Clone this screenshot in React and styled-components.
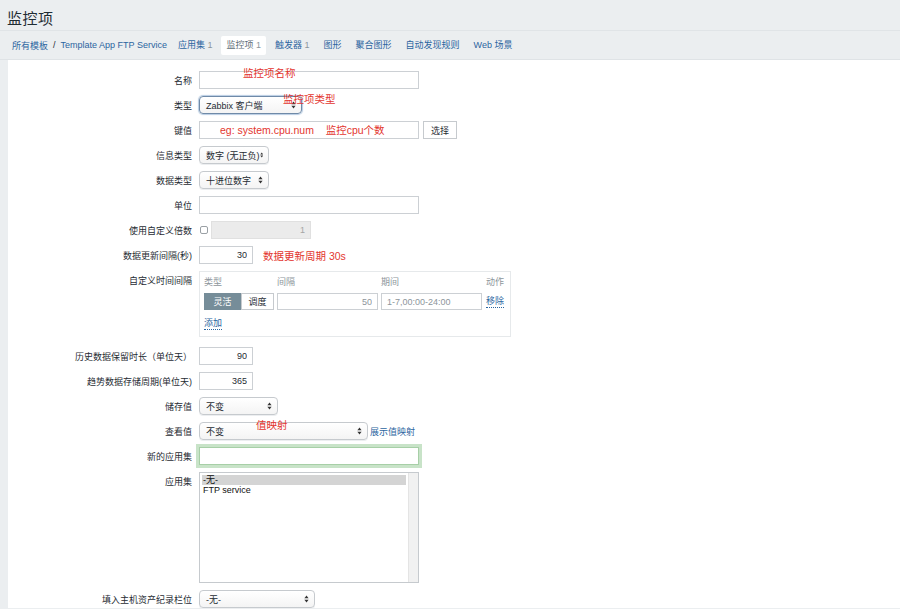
import React from "react";
import styled, { createGlobalStyle, css } from "styled-components";

const GlobalStyle = createGlobalStyle`
  html, body {
    margin: 0;
    padding: 0;
    background: #ebeef0;
    overflow: hidden;
  }
  body {
    font-family: "Liberation Sans", "Noto Sans CJK SC", sans-serif;
    color: #1f2c33;
  }
  * { box-sizing: border-box; }
`;

const Arrows = () => (
  <svg width="5" height="8" viewBox="0 0 5 8">
    <path d="M2.5 0.5 L4.6 3.2 L0.4 3.2 Z" fill="#333" />
    <path d="M2.5 7.5 L4.6 4.8 L0.4 4.8 Z" fill="#333" />
  </svg>
);

const App = () => {
  return (
    <>
      <GlobalStyle />
      <Header>
        <Title>监控项</Title>
      </Header>
      <NavBar>
        <Crumbs>
          <NavLink>所有模板</NavLink>
          <Slash>/</Slash>
          <NavLink>Template App FTP Service</NavLink>
        </Crumbs>
        <NavItem>
          应用集 <Count>1</Count>
        </NavItem>
        <NavItem $active>
          监控项 <Count>1</Count>
        </NavItem>
        <NavItem>
          触发器 <Count>1</Count>
        </NavItem>
        <NavItem>图形</NavItem>
        <NavItem>聚合图形</NavItem>
        <NavItem>自动发现规则</NavItem>
        <NavItem>Web 场景</NavItem>
      </NavBar>

      <Content>
        <Row>
          <Label>名称</Label>
          <Field>
            <Overlay>
              <TextInput $w={220} />
              <Note style={{ left: 44, top: -6 }}>监控项名称</Note>
            </Overlay>
          </Field>
        </Row>

        <Row>
          <Label>类型</Label>
          <Field>
            <Overlay>
              <Select $w={103} $focus>
                <span>Zabbix 客户端</span>
                <Arrows />
              </Select>
              <Note style={{ left: 84, top: -5 }}>监控项类型</Note>
            </Overlay>
          </Field>
        </Row>

        <Row>
          <Label>键值</Label>
          <Field>
            <Overlay>
              <TextInput $w={220} />
              <Note style={{ left: 21, top: 1 }}>
                eg: system.cpu.num&nbsp;&nbsp;&nbsp; 监控cpu个数
              </Note>
            </Overlay>
            <Button>选择</Button>
          </Field>
        </Row>

        <Row>
          <Label>信息类型</Label>
          <Field>
            <Select $w={70}>
              <span>数字 (无正负)</span>
              <Arrows />
            </Select>
          </Field>
        </Row>

        <Row>
          <Label>数据类型</Label>
          <Field>
            <Select $w={70}>
              <span>十进位数字</span>
              <Arrows />
            </Select>
          </Field>
        </Row>

        <Row>
          <Label>单位</Label>
          <Field>
            <TextInput $w={220} />
          </Field>
        </Row>

        <Row>
          <Label>使用自定义倍数</Label>
          <Field $gap={3}>
            <Checkbox />
            <TextInput $w={100} $right $disabled defaultValue="1" disabled />
          </Field>
        </Row>

        <Row>
          <Label>数据更新间隔(秒)</Label>
          <Field $gap={10}>
            <TextInput $w={54} $right defaultValue="30" />
            <InlineNote>数据更新周期 30s</InlineNote>
          </Field>
        </Row>

        <Row $top $after={10}>
          <Label $pad={3}>自定义时间间隔</Label>
          <IntervalBox>
            <IntervalGrid>
              <ColHead>类型</ColHead>
              <ColHead>间隔</ColHead>
              <ColHead>期间</ColHead>
              <ColHead>动作</ColHead>
              <Segmented>
                <Segment $on>灵活</Segment>
                <Segment>调度</Segment>
              </Segmented>
              <TextInput $w={101} $h={17} $right $muted defaultValue="50" />
              <TextInput $w={101} $h={17} placeholder="1-7,00:00-24:00" />
              <DotLink>移除</DotLink>
            </IntervalGrid>
            <AddRow>
              <DotLink>添加</DotLink>
            </AddRow>
          </IntervalBox>
        </Row>

        <Row>
          <Label>历史数据保留时长（单位天）</Label>
          <Field>
            <TextInput $w={54} $right defaultValue="90" />
          </Field>
        </Row>

        <Row>
          <Label>趋势数据存储周期(单位天)</Label>
          <Field>
            <TextInput $w={54} $right defaultValue="365" />
          </Field>
        </Row>

        <Row>
          <Label>储存值</Label>
          <Field>
            <Select $w={79}>
              <span>不变</span>
              <Arrows />
            </Select>
          </Field>
        </Row>

        <Row>
          <Label>查看值</Label>
          <Field $gap={2}>
            <Overlay>
              <Select $w={169}>
                <span>不变</span>
                <Arrows />
              </Select>
              <Note style={{ left: 57, top: -5 }}>值映射</Note>
            </Overlay>
            <PlainLink>展示值映射</PlainLink>
          </Field>
        </Row>

        <Row>
          <Label>新的应用集</Label>
          <Field>
            <TextInput $w={220} $green />
          </Field>
        </Row>

        <Row $top>
          <Label $pad={3}>应用集</Label>
          <ListBox>
            <Options>
              <Option $sel>-无-</Option>
              <Option>FTP service</Option>
            </Options>
            <Track />
          </ListBox>
        </Row>

        <Row>
          <Label>填入主机资产纪录栏位</Label>
          <Field>
            <Select $w={116}>
              <span>-无-</span>
              <Arrows />
            </Select>
          </Field>
        </Row>
      </Content>
    </>
  );
};

export default App;

const Header = styled.div`
  height: 31px;
  padding: 9px 0 0 7px;
  border-bottom: 1px solid #e0e4e7;
`;

const Title = styled.h1`
  margin: 0;
  font-size: 15px;
  font-weight: normal;
  line-height: 20px;
  color: #1f2c33;
  letter-spacing: 0.5px;
`;

const NavBar = styled.div`
  height: 29px;
  display: flex;
  align-items: center;
  gap: 4px;
  padding-left: 7px;
  border-bottom: 1px solid #dfe3e6;
  font-size: 9px;
`;

const Crumbs = styled.div`
  display: flex;
  align-items: center;
  gap: 5px;
  padding-left: 5px;
  margin-right: 2px;
`;

const NavLink = styled.span`
  color: #2b65a0;
`;

const Slash = styled.span`
  color: #1f2c33;
`;

const NavItem = styled.span`
  padding: 0 5px;
  height: 19px;
  line-height: 19px;
  color: ${(p) => (p.$active ? "#5e6c75" : "#2b65a0")};
  background: ${(p) => (p.$active ? "#ffffff" : "transparent")};
  border-radius: 2px;
`;

const Count = styled.span`
  color: #8b969d;
`;

const Content = styled.div`
  margin-left: 8px;
  background: #fff;
  min-height: calc(100vh - 61px);
  padding-top: 11px;
`;

const Row = styled.div`
  display: grid;
  grid-template-columns: 184px 1fr;
  column-gap: 7px;
  align-items: ${(p) => (p.$top ? "start" : "center")};
  min-height: 18px;
  margin-bottom: ${(p) => p.$after || 7}px;
`;

const Label = styled.div`
  text-align: right;
  font-size: 9px;
  color: #1f2c33;
  white-space: nowrap;
  padding-top: ${(p) => p.$pad || 0}px;
`;

const Field = styled.div`
  display: flex;
  align-items: center;
  gap: ${(p) => p.$gap ?? 4}px;
`;

const Overlay = styled.div`
  position: relative;
  display: flex;
`;

const Note = styled.span`
  position: absolute;
  white-space: nowrap;
  font-size: 10.5px;
  color: #e3362f;
  pointer-events: none;
`;

const InlineNote = styled.span`
  font-size: 10.5px;
  color: #e3362f;
  white-space: nowrap;
`;

const TextInput = styled.input`
  width: ${(p) => p.$w}px;
  height: ${(p) => p.$h || 18}px;
  margin: 0;
  padding: 0 5px;
  border: 1px solid #ccd0d4;
  border-radius: 0;
  background: #fff;
  font-family: inherit;
  font-size: 9px;
  color: #1f2c33;
  text-align: ${(p) => (p.$right ? "right" : "left")};
  outline: none;
  &::placeholder {
    color: #8d959b;
  }
  ${(p) =>
    p.$muted &&
    css`
      color: #8d959b;
    `}
  ${(p) =>
    p.$disabled &&
    css`
      background: #ebebeb;
      border-color: #e0e0e0;
      color: #a5a5a5;
    `}
  ${(p) =>
    p.$green &&
    css`
      border-color: #a7cfa7;
      box-shadow: 0 0 0 3px #c8e3c8;
    `}
`;

const Select = styled.div`
  width: ${(p) => p.$w}px;
  height: 18px;
  display: flex;
  align-items: center;
  justify-content: space-between;
  padding: 0 5px 0 6px;
  border: 1px solid ${(p) => (p.$focus ? "#6f8aa8" : "#c6cace")};
  border-radius: 4px;
  background: linear-gradient(#ffffff, #f4f4f4);
  box-shadow: ${(p) => (p.$focus ? "0 0 1px 1px #b9cde3" : "0 1px 0 #eceef0")};
  font-size: 9px;
  color: #1f2c33;
  white-space: nowrap;
`;

const Button = styled.div`
  width: 34px;
  height: 18px;
  display: flex;
  align-items: center;
  justify-content: center;
  border: 1px solid #c6cace;
  background: #fff;
  font-size: 9px;
  color: #1f2c33;
`;

const Checkbox = styled.span`
  width: 8px;
  height: 8px;
  margin-left: 1px;
  border: 1px solid #9aa0a5;
  border-radius: 2px;
  background: #fff;
`;

const IntervalBox = styled.div`
  width: 312px;
  border: 1px solid #e6e9eb;
  padding: 4px 4px 6px 4px;
`;

const IntervalGrid = styled.div`
  display: grid;
  grid-template-columns: 73px 104px 105px auto;
  row-gap: 4px;
  align-items: center;
`;

const ColHead = styled.div`
  font-size: 9px;
  color: #8d959b;
  line-height: 13px;
`;

const Segmented = styled.div`
  display: flex;
`;

const Segment = styled.div`
  width: ${(p) => (p.$on ? 37 : 33)}px;
  height: 17px;
  display: flex;
  align-items: center;
  justify-content: center;
  font-size: 9px;
  color: ${(p) => (p.$on ? "#ffffff" : "#1f2c33")};
  background: ${(p) => (p.$on ? "#768d99" : "#ffffff")};
  border: 1px solid ${(p) => (p.$on ? "#768d99" : "#c6cace")};
`;

const DotLink = styled.span`
  font-size: 9px;
  color: #2b65a0;
  border-bottom: 1px dotted #2b65a0;
  justify-self: start;
  line-height: 11px;
`;

const AddRow = styled.div`
  margin-top: 8px;
  display: flex;
`;

const PlainLink = styled.span`
  font-size: 9px;
  color: #2b65a0;
`;

const ListBox = styled.div`
  width: 220px;
  height: 111px;
  display: flex;
  border: 1px solid #c6cace;
  background: #fff;
`;

const Options = styled.div`
  flex: 1;
  padding: 2px 2px 0 2px;
`;

const Option = styled.div`
  font-size: 9px;
  line-height: 10px;
  color: #111;
  padding-left: 1px;
  background: ${(p) => (p.$sel ? "#d4d4d4" : "transparent")};
`;

const Track = styled.div`
  width: 10px;
  background: #f1f1f1;
  border-left: 1px solid #e4e4e4;
`;
